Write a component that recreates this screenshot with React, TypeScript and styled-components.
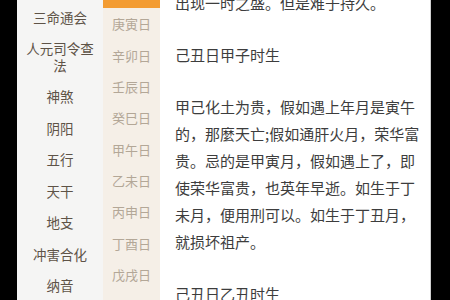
import React from "react";
import styled, { createGlobalStyle } from "styled-components";

const Global = createGlobalStyle`
  html, body { margin: 0; padding: 0; background: #000; }
  body { font-family: "Noto Sans CJK SC", "Noto Sans", sans-serif; }
`;

const Frame = styled.div`
  display: flex;
  width: 450px;
  height: 300px;
  overflow: hidden;
  background: #000;
`;

const Edge = styled.div<{ $w: number }>`
  flex: 0 0 ${(p) => p.$w}px;
  background: #000;
`;

const SideNav = styled.nav`
  flex: 0 0 86px;
  background: #f5f5f4;
  display: flex;
  flex-direction: column;
  padding-top: 1px;
`;

const SideItem = styled.div`
  padding: 7.5px 4px;
  font-size: 13.5px;
  line-height: 16.5px;
  color: #5e5347;
  text-align: center;
`;

const SubNav = styled.div`
  flex: 0 0 57px;
  background: #f5efe7;
  display: flex;
  flex-direction: column;
  margin-top: -23px;
`;

const SubItem = styled.div<{ $active?: boolean }>`
  flex: 0 0 31.3px;
  display: flex;
  align-items: center;
  justify-content: center;
  font-size: 13px;
  color: ${(p) => (p.$active ? "#fff" : "#b3a797")};
  background: ${(p) => (p.$active ? "#f39c32" : "transparent")};
`;

const Content = styled.article`
  flex: 0 0 255px;
  background: #fff;
  border-right: 1px solid #d0d0d0;
  padding: 0 0 0 15px;
  color: #3d3d3d;
  font-size: 15px;
  line-height: 27px;
`;

const Inner = styled.div`
  margin-top: -11.5px;
  white-space: nowrap;
`;

const Para = styled.p`
  margin: 0 0 25px 0;
`;

const sideItems = ["三命通会", "人元司令查法", "神煞", "阴阳", "五行", "天干", "地支", "冲害合化", "纳音"];
const subItems = ["己丑日", "庚寅日", "辛卯日", "壬辰日", "癸巳日", "甲午日", "乙未日", "丙申日", "丁酉日", "戊戌日"];

const bodyLines = [
  "甲己化土为贵，假如遇上年月是寅午",
  "的，那麼天亡;假如通肝火月，荣华富",
  "贵。忌的是甲寅月，假如遇上了，即",
  "使荣华富贵，也英年早逝。如生于丁",
  "未月，便用刑可以。如生于丁丑月，",
  "就损坏祖产。",
];

export default function App() {
  return (
    <>
      <Global />
      <Frame>
        <Edge $w={17} />
        <SideNav>
          {sideItems.map((s) => (
            <SideItem key={s}>
              {s === "人元司令查法" ? (
                <>
                  人元司令查
                  <br />法
                </>
              ) : (
                s
              )}
            </SideItem>
          ))}
        </SideNav>
        <SubNav>
          {subItems.map((s, i) => (
            <SubItem key={s} $active={i === 0}>
              {s}
            </SubItem>
          ))}
        </SubNav>
        <Content>
          <Inner>
            <Para>出现一时之盛。但是难于持久。</Para>
            <Para>己丑日甲子时生</Para>
            <Para>
              {bodyLines.map((l, i) => (
                <React.Fragment key={i}>
                  {l}
                  {i < bodyLines.length - 1 && <br />}
                </React.Fragment>
              ))}
            </Para>
            <Para>己丑日乙丑时生</Para>
          </Inner>
        </Content>
        <Edge $w={20} />
      </Frame>
    </>
  );
}
